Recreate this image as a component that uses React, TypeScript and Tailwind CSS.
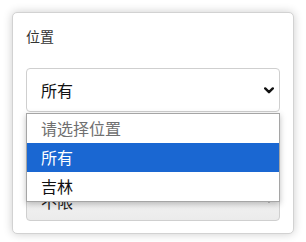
import React from "react";

const Chevron = ({ className = "" }: { className?: string }) => (
  <svg width="10" height="7" viewBox="0 0 10 7" className={className}>
    <path d="M1.2 1.4 L5 5.2 L8.8 1.4" fill="none" stroke="#111" strokeWidth="2.4" strokeLinecap="round" strokeLinejoin="round" />
  </svg>
);

export default function App() {
  return (
    <div
      className="w-[306px] h-[242px] bg-white pt-[12px] pl-[12px]"
      style={{ fontFamily: '"Microsoft YaHei", "Noto Sans CJK SC", "Noto Sans", sans-serif' }}
    >
      <div className="w-[282px] h-[222px] rounded-[5px] border border-[#d2d2d2] bg-white shadow-[0_0_10px_rgba(0,0,0,0.2)] px-[13px] pt-[13px] overflow-hidden">
        <div className="text-[14px] leading-[20px] text-[#333]">位置</div>
        <div className="relative mt-[22px]">
          <div className="h-[44px] w-[254px] rounded-[4px] border border-[#cfcfcf] bg-white flex items-center justify-between pl-[14px] pr-[5px]">
            <span className="text-[16px] text-[#111]">所有</span>
            <Chevron />
          </div>
          <div className="absolute left-0 top-[45px] z-10 w-[254px] border border-[#a5a5a5] bg-white shadow-[0_2px_6px_rgba(0,0,0,0.25)] text-[16px] leading-[29px]">
            <div className="h-[29px] pl-[14px] text-[#707070]">请选择位置</div>
            <div className="h-[29px] pl-[14px] bg-[#1a67d2] text-white">所有</div>
            <div className="h-[29px] pl-[14px] text-[#111]">吉林</div>
          </div>
        </div>
        <div className="mt-[65px] h-[44px] w-[254px] rounded-[4px] border border-[#cfcfcf] bg-gradient-to-b from-[#fafafa] to-[#ebebeb] flex items-center justify-between pl-[14px] pr-[5px]">
          <span className="text-[16px] text-[#222] translate-y-[2px]">不限</span>
          <Chevron />
        </div>
      </div>
    </div>
  );
}
